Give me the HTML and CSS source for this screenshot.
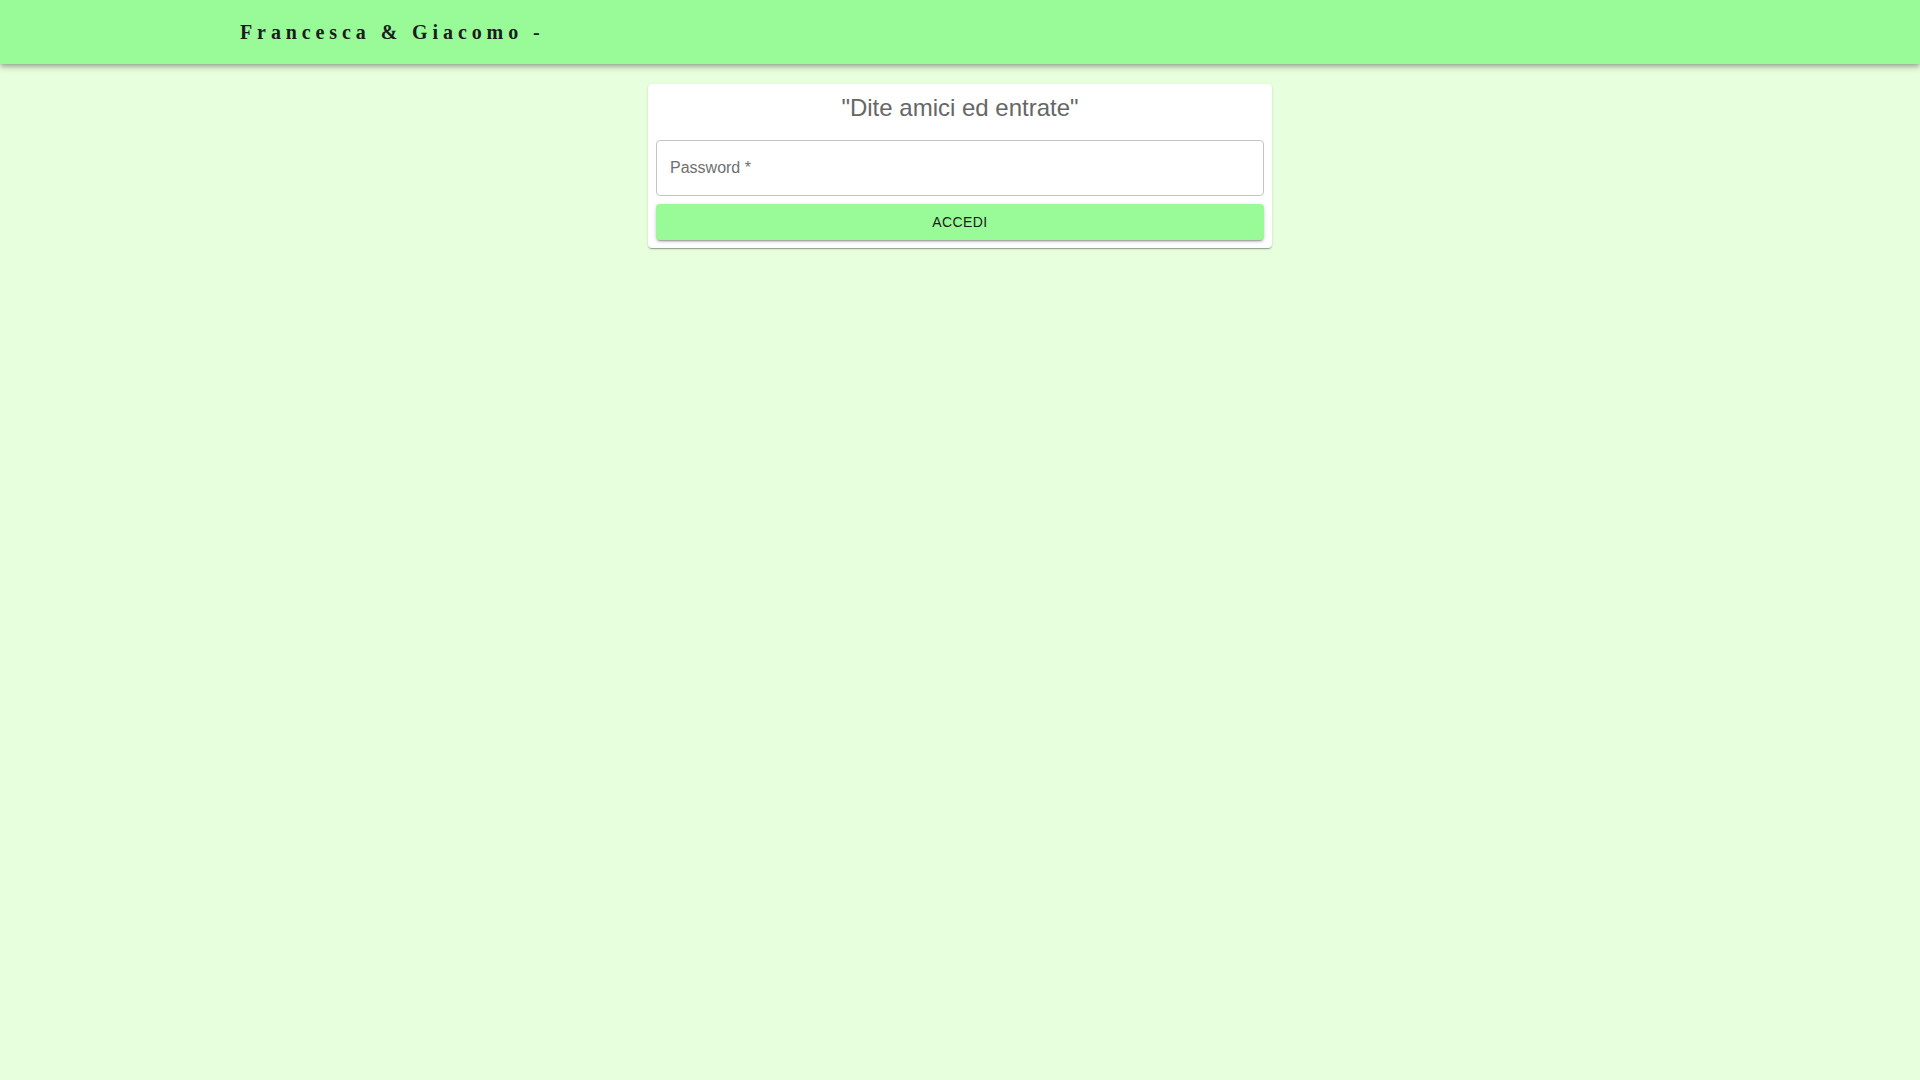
FILE: index.html
```html
<!DOCTYPE html>
<html lang="it">
<head>
<meta charset="utf-8">
<title>Francesca & Giacomo</title>
<link rel="stylesheet" href="styles.css">
</head>
<body>
<header class="appbar">
  <div class="toolbar">
    <h1 class="brand">Francesca &amp; Giacomo -</h1>
  </div>
</header>
<main class="content">
  <section class="card">
    <h2 class="card-title">"Dite amici ed entrate"</h2>
    <div class="field">
      <input class="field-input" type="password" placeholder="Password *" aria-label="Password">
    </div>
    <button class="btn" type="button">Accedi</button>
  </section>
</main>
</body>
</html>
```
FILE: styles.css
```css
html, body {
  margin: 0;
  padding: 0;
}
body {
  background: #e8ffde;
  min-height: 100vh;
  font-family: "Liberation Sans", Arial, sans-serif;
}
.appbar {
  background: #98fb98;
  height: 64px;
  box-shadow: 0 2px 4px -1px rgba(0,0,0,0.2), 0 4px 5px 0 rgba(0,0,0,0.14), 0 1px 10px 0 rgba(0,0,0,0.12);
  position: relative;
  z-index: 1;
}
.toolbar {
  height: 64px;
  display: flex;
  align-items: center;
  padding-left: 240px;
}
.brand {
  margin: 0;
  font-family: "Liberation Serif", "Times New Roman", serif;
  font-weight: bold;
  font-size: 20px;
  letter-spacing: 4.9px;
  color: #1c1c1c;
}
.content {
  display: flex;
  justify-content: center;
  padding-top: 20px;
}
.card {
  width: 608px;
  padding: 8px;
  background: #fff;
  border-radius: 4px;
  box-shadow: 0 2px 1px -1px rgba(0,0,0,0.2), 0 1px 1px 0 rgba(0,0,0,0.14), 0 1px 3px 0 rgba(0,0,0,0.12);
}
.card-title {
  margin: 0;
  text-align: center;
  font-weight: normal;
  font-size: 24px;
  line-height: 32px;
  color: #666;
}
.field {
  margin-top: 16px;
}
.field-input {
  box-sizing: border-box;
  width: 100%;
  height: 56px;
  border: 1px solid #c4c4c4;
  border-radius: 4px;
  padding: 0 13px;
  font-family: "Liberation Sans", Arial, sans-serif;
  font-size: 16px;
  color: #333;
  outline: none;
  background: #fff;
}
.field-input::placeholder {
  color: #6f6f6f;
}
.btn {
  display: block;
  width: 100%;
  height: 36px;
  margin-top: 8px;
  border: none;
  border-radius: 4px;
  background: #98fb98;
  color: #1a1a1a;
  font-family: "Liberation Sans", Arial, sans-serif;
  font-size: 14px;
  text-transform: uppercase;
  letter-spacing: 0.4px;
  box-shadow: 0 3px 1px -2px rgba(0,0,0,0.2), 0 2px 2px 0 rgba(0,0,0,0.14), 0 1px 5px 0 rgba(0,0,0,0.12);
  cursor: pointer;
}
```
